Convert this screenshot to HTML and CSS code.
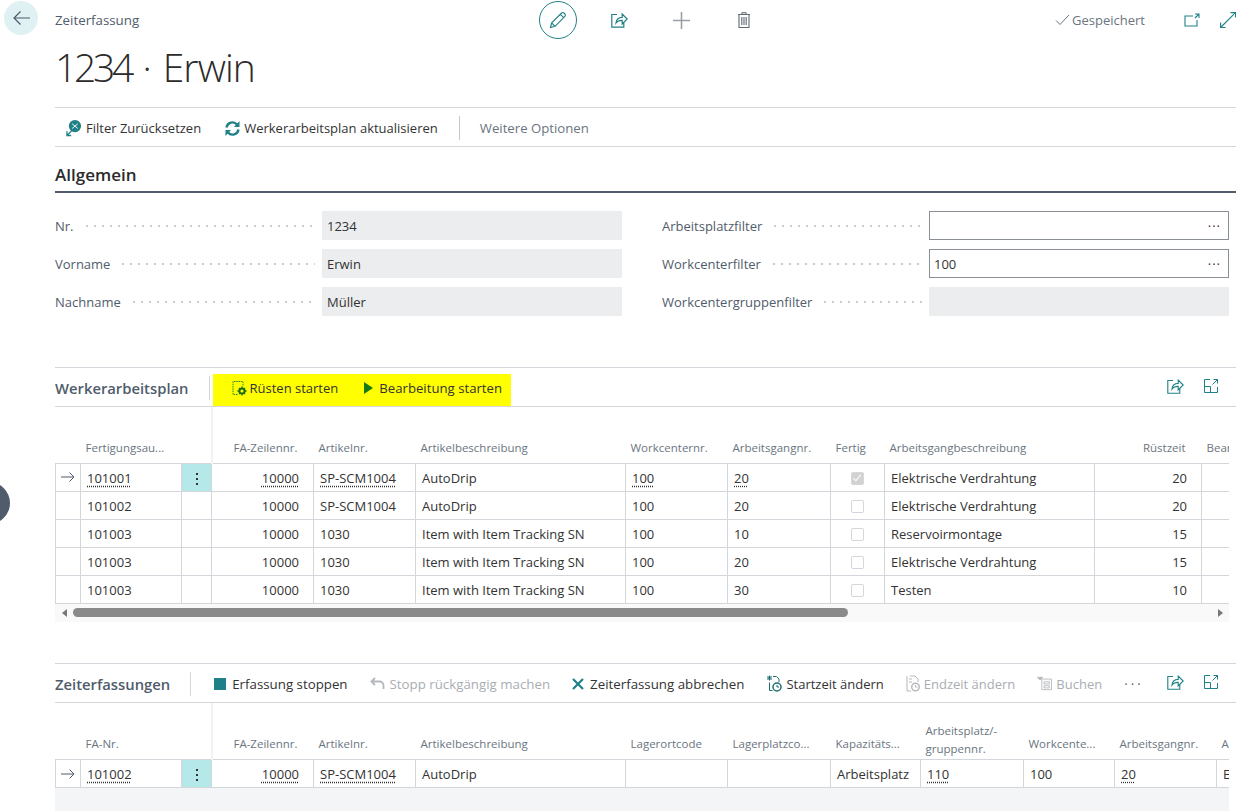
FILE: index.html
```html
<!DOCTYPE html>
<html lang="de">
<head>
    <meta charset="UTF-8">
    <title>Zeiterfassung</title>
    <link rel="stylesheet" href="styles.css">
</head>
<body>
    <div class="back-btn">
        <svg width="17" height="14" viewBox="0 0 17 14" fill="none" stroke="#505c6b" stroke-width="1.2"><path d="M17 7H1M7.500 .5L1 7l6.500 6.500"/></svg>
    </div>
    <div class="side-handle"></div>

    <header class="top-bar">
        <div class="crumb">Zeiterfassung</div>
        <div class="top-actions">
            <span class="edit-btn">
                <svg width="18" height="18" viewBox="0 0 18 18" fill="none" stroke="#1f8087" stroke-width="1.1"><path d="M1.500 16.500l1.200-4.600L12.600 2a1.600 1.600 0 0 1 2.300 0l1 1a1.600 1.600 0 0 1 0 2.300L6 15.300zM2.700 11.900l3.300 3.400M11.300 3.300l3.400 3.400"/></svg>
            </span>
            <span class="top-icon">
                <svg width="17" height="16" viewBox="0 0 17 16" fill="none" stroke="#1f8087" stroke-width="1.2"><path d="M6 2.500H.8v12.700h12V10M5 11c.4-3.500 2.700-5.600 6.200-5.600V2l5 5-5 5V8.400C8.500 8.300 6.500 9 5 11z"/></svg>
            </span>
            <span class="top-icon">
                <svg width="17" height="17" viewBox="0 0 17 17" fill="none" stroke="#9b9fa6" stroke-width="1.6"><path d="M8.500 0v17M0 8.500h17"/></svg>
            </span>
            <span class="top-icon">
                <svg width="14" height="16" viewBox="0 0 14 16" fill="none" stroke="#5f6a75" stroke-width="1.1"><path d="M1 2.500h12M5 2.500V.8h4v1.700M2 2.500v13h10v-13M4.800 5v8M7 5v8M9.200 5v8"/></svg>
            </span>
        </div>
        <div class="saved">
            <svg width="15" height="12" viewBox="0 0 15 12" fill="none" stroke="#6b7580" stroke-width="1"><path d="M1 6.500L5 10.500 14 1"/></svg>
            Gespeichert
        </div>
        <span class="open-icon">
            <svg width="16" height="14" viewBox="0 0 16 14" fill="none" stroke="#1f8087" stroke-width="1.1"><path d="M9 3H1v10h12V7M11 1h4v4M15 1l-4 4"/></svg>
        </span>
        <span class="expand-icon">
            <svg width="16" height="16" viewBox="0 0 16 16" fill="none" stroke="#1f8087" stroke-width="1.1"><path d="M10.500 .6h5v5M15.500 .6L.6 15.500M.6 10.500v5h5"/></svg>
        </span>
    </header>

    <main class="page">
        <h1 class="page-title"><span class="title-no">1234</span> · Erwin</h1>

        <nav class="action-bar">
            <span class="action">
                <svg width="16" height="18" viewBox="0 0 17 18"><circle cx="9.500" cy="7" r="6.500" fill="#1f8087"/><path d="M6.500 4.500l6 5M12.500 4.500l-6 5" stroke="#fff"/><path d="M1 17l5.500-5.500M1 12.500V17h4.500" fill="none" stroke="#1f8087" stroke-width="1.400"/></svg>
                Filter Zurücksetzen
            </span>
            <span class="action">
                <svg width="15" height="15" viewBox="0 0 15 15" fill="none" stroke="#1f8087" stroke-width="2.400"><path d="M1.500 6.500A6 6 0 0 1 12 3.500M13.500 8.500A6 6 0 0 1 3 11.500"/><path d="M14.500 0v6h-5.500zM.5 15V9H6z" fill="#1f8087" stroke="none"/></svg>
                Werkerarbeitsplan aktualisieren
            </span>
            <span class="bar-divider"></span>
            <span class="action action-muted">Weitere Optionen</span>
        </nav>

        <section class="general">
            <h2 class="general-title">Allgemein</h2>
            <div class="field-columns">
                <div class="field-col">
                    <div class="field"><span class="field-label">Nr.</span><span class="field-value">1234</span></div>
                    <div class="field"><span class="field-label">Vorname</span><span class="field-value">Erwin</span></div>
                    <div class="field"><span class="field-label">Nachname</span><span class="field-value">Müller</span></div>
                </div>
                <div class="field-col">
                    <div class="field"><span class="field-label">Arbeitsplatzfilter</span><span class="field-value editable"><i class="more">···</i></span></div>
                    <div class="field"><span class="field-label">Workcenterfilter</span><span class="field-value editable">100<i class="more">···</i></span></div>
                    <div class="field"><span class="field-label">Workcentergruppenfilter</span><span class="field-value"></span></div>
                </div>
            </div>
        </section>

        <section class="part part-plan">
            <div class="part-bar">
                <h2 class="part-title">Werkerarbeitsplan</h2>
                <span class="part-divider"></span>
                <div class="highlight">
                    <span class="action">
                        <svg width="16" height="16" viewBox="0 0 16 16" fill="none"><path d="M6.500 14.500H2V1.500h10V6.500" stroke="#2a8a2a" stroke-dasharray="1.500 .8"/><circle cx="11" cy="11" r="2.600" stroke="#1a6e1a" stroke-width="2"/><path d="M11 6.500v2M11 13.500v2M6.500 11h2M13.500 11h2M8 8l1.200 1.200M14 14l-1.200-1.200M14 8l-1.200 1.200M8 14l1.200-1.200" stroke="#1a6e1a" stroke-width="1.300"/></svg>
                        Rüsten starten
                    </span>
                    <span class="action play-action">
                        <svg width="9" height="12" viewBox="0 0 9 12"><path d="M0 0l9 6-9 6z" fill="#147a14"/></svg>
                        Bearbeitung starten
                    </span>
                </div>
                <div class="part-icons">
                    <svg width="17" height="16" viewBox="0 0 17 16" fill="none" stroke="#1f8087" stroke-width="1.100"><path d="M6 2.500H.8v12.700h12V10M5 11c.4-3.500 2.700-5.600 6.200-5.600V2l5 5-5 5V8.400C8.500 8.300 6.500 9 5 11z"/></svg>
                    <svg width="14" height="14" viewBox="0 0 14 14" fill="none" stroke="#1f8087"><path d="M6 .5H.5v13h13V8M.5 7.500H6.500v6M8.500 5.500l5-5M9.500 .5h4v4"/></svg>
                </div>
            </div>
            <div class="grid-wrap">
                <table class="grid plan-grid">
                    <colgroup>
                        <col class="w25"><col class="w101"><col class="w30"><col class="w102"><col class="w102"><col class="w210"><col class="w102"><col class="w103"><col class="w54"><col class="w210"><col class="w107"><col class="w102">
                    </colgroup>
                    <thead>
                        <tr>
                            <th></th><th>Fertigungsau...</th><th class="th-split"></th><th class="num">FA-Zeilennr.</th><th>Artikelnr.</th><th>Artikelbeschreibung</th><th>Workcenternr.</th><th>Arbeitsgangnr.</th><th>Fertig</th><th>Arbeitsgangbeschreibung</th><th class="num">Rüstzeit</th><th>Bearbeitungszeit</th>
                        </tr>
                    </thead>
                    <tbody>
                        <tr>
                            <td class="marker"><svg width="14" height="10" viewBox="0 0 14 10" fill="none" stroke="#505c6b"><path d="M0 5h13M8.500 .5L13 5l-4.500 4.500"/></svg></td>
                            <td><a class="lnk">101001</a></td><td class="dots-cell"><span class="dots"></span></td><td class="num"><a class="lnk">10000</a></td><td><a class="lnk">SP-SCM1004</a></td><td>AutoDrip</td><td><a class="lnk">100</a></td><td><a class="lnk">20</a></td><td class="center"><span class="check checked"></span></td><td>Elektrische Verdrahtung</td><td class="num">20</td><td></td>
                        </tr>
                        <tr>
                            <td></td><td>101002</td><td></td><td class="num">10000</td><td>SP-SCM1004</td><td>AutoDrip</td><td>100</td><td>20</td><td class="center"><span class="check"></span></td><td>Elektrische Verdrahtung</td><td class="num">20</td><td></td>
                        </tr>
                        <tr>
                            <td></td><td>101003</td><td></td><td class="num">10000</td><td>1030</td><td>Item with Item Tracking SN</td><td>100</td><td>10</td><td class="center"><span class="check"></span></td><td>Reservoirmontage</td><td class="num">15</td><td></td>
                        </tr>
                        <tr>
                            <td></td><td>101003</td><td></td><td class="num">10000</td><td>1030</td><td>Item with Item Tracking SN</td><td>100</td><td>20</td><td class="center"><span class="check"></span></td><td>Elektrische Verdrahtung</td><td class="num">15</td><td></td>
                        </tr>
                        <tr>
                            <td></td><td>101003</td><td></td><td class="num">10000</td><td>1030</td><td>Item with Item Tracking SN</td><td>100</td><td>30</td><td class="center"><span class="check"></span></td><td>Testen</td><td class="num">10</td><td></td>
                        </tr>
                    </tbody>
                </table>
            </div>
            <div class="scrollbar">
                <span class="arrow-left"></span>
                <span class="thumb"></span>
                <span class="arrow-right"></span>
            </div>
        </section>

        <section class="part part-entries">
            <div class="part-bar">
                <h2 class="part-title">Zeiterfassungen</h2>
                <span class="part-divider"></span>
                <div class="entry-actions">
                    <span class="action wide-gap">
                        <svg width="12" height="12" viewBox="0 0 12 12"><rect width="12" height="12" fill="#1f8087"/></svg>
                        Erfassung stoppen
                    </span>
                    <span class="action disabled">
                        <svg width="15" height="13" viewBox="0 0 15 13" fill="none" stroke="#b4b7bc" stroke-width="1.800"><path d="M5 1L1.500 4.500 5 8M2 4.500h7.500a4 4 0 0 1 4 4v3.500"/></svg>
                        Stopp rückgängig machen
                    </span>
                    <span class="action wide-gap">
                        <svg width="12" height="12" viewBox="0 0 12 12" stroke="#1f8087" stroke-width="2.200"><path d="M1 1l10 10M11 1L1 11"/></svg>
                        Zeiterfassung abbrechen
                    </span>
                    <span class="action compact">
                        <svg width="16" height="17" viewBox="0 0 16 17" fill="none" stroke="#1f6e75"><path d="M7 1.500h3.500L13 4v3M3.500 7.500v8h3"/><path d="M1 3h5M3.500 .5v5M1.500 1l4 4M5.500 1l-4 4"/><circle cx="11" cy="12" r="4" stroke-width="1.500"/><path d="M11 10v2h2"/></svg>
                        Startzeit ändern
                    </span>
                    <span class="action disabled compact">
                        <svg width="14" height="17" viewBox="0 0 14 17" fill="none" stroke="#b4b7bc"><path d="M4 1h5l3 3v3M1 1v15h4M3 4h3M3 7h3"/><circle cx="9.500" cy="12" r="3.800" stroke-width="1.400"/><path d="M9.500 10v2h2"/></svg>
                        Endzeit ändern
                    </span>
                    <span class="action disabled compact">
                        <svg width="15" height="15" viewBox="0 0 17 15" fill="none" stroke="#b4b7bc"><path d="M5.500 2.500h11v12h-11zM8 5.500h6v2.500h-6zM8 10h6v2.500h-6z"/><path d="M.5 .5h6l-3 3z" fill="#b4b7bc"/></svg>
                        Buchen
                    </span>
                    <span class="more-actions">···</span>
                </div>
                <div class="part-icons">
                    <svg width="17" height="16" viewBox="0 0 17 16" fill="none" stroke="#1f8087" stroke-width="1.100"><path d="M6 2.500H.8v12.700h12V10M5 11c.4-3.500 2.700-5.600 6.200-5.600V2l5 5-5 5V8.400C8.500 8.300 6.500 9 5 11z"/></svg>
                    <svg width="14" height="14" viewBox="0 0 14 14" fill="none" stroke="#1f8087"><path d="M6 .5H.5v13h13V8M.5 7.500H6.500v6M8.500 5.500l5-5M9.500 .5h4v4"/></svg>
                </div>
            </div>
            <div class="grid-wrap">
                <table class="grid entry-grid">
                    <colgroup>
                        <col class="w25"><col class="w101"><col class="w30"><col class="w102"><col class="w102"><col class="w210"><col class="w102"><col class="w103"><col class="w90"><col class="w103"><col class="w91"><col class="w102"><col class="w210">
                    </colgroup>
                    <thead>
                        <tr>
                            <th></th><th>FA-Nr.</th><th class="th-split"></th><th class="num">FA-Zeilennr.</th><th>Artikelnr.</th><th>Artikelbeschreibung</th><th>Lagerortcode</th><th>Lagerplatzco...</th><th>Kapazitäts...</th><th class="wrap">Arbeitsplatz/-<br>gruppennr.</th><th>Workcente...</th><th>Arbeitsgangnr.</th><th>Arbeitsgangbeschreibung</th>
                        </tr>
                    </thead>
                    <tbody>
                        <tr>
                            <td class="marker"><svg width="14" height="10" viewBox="0 0 14 10" fill="none" stroke="#505c6b"><path d="M0 5h13M8.500 .5L13 5l-4.500 4.500"/></svg></td>
                            <td><a class="lnk">101002</a></td><td class="dots-cell"><span class="dots"></span></td><td class="num"><a class="lnk">10000</a></td><td><a class="lnk">SP-SCM1004</a></td><td>AutoDrip</td><td></td><td></td><td>Arbeitsplatz</td><td><a class="lnk">110</a></td><td>100</td><td><a class="lnk">20</a></td><td>Elektrische Verdrahtung</td>
                        </tr>
                    </tbody>
                </table>
            </div>
            <div class="grid-footer"></div>
        </section>
    </main>
</body>
</html>
```

FILE: styles.css
```css
:root {
    --teal: #1f8087;
    --slate: #505c6b;
    --grey-text: #6b7580;
    --line: #d5d7dc;
    --cell-line: #d3d6da;
}

html, body {
    height: 811px;
    overflow: hidden;
}

body {
    margin: 0;
    background: #fff;
    color: #212121;
    font-family: "Open Sans", "Liberation Sans", sans-serif;
    font-size: 13px;
    position: relative;
}

svg {
    display: block;
    flex: none;
}

.back-btn {
    position: absolute;
    left: 4px;
    top: 1px;
    width: 34px;
    height: 34px;
    border-radius: 50%;
    background: #dff1f2;
    display: flex;
    align-items: center;
    justify-content: center;
}

.side-handle {
    position: absolute;
    left: -32px;
    top: 482px;
    width: 42px;
    height: 42px;
    border-radius: 50%;
    background: var(--slate);
}

.top-bar {
    display: flex;
    align-items: center;
    height: 40px;
    padding-left: 55px;
}

.crumb {
    width: 484px;
    color: var(--slate);
    font-size: 13.3px;
}

.top-actions {
    display: flex;
    align-items: center;
}

.edit-btn {
    width: 36px;
    height: 36px;
    border: 1px solid var(--teal);
    border-radius: 50%;
    display: flex;
    align-items: center;
    justify-content: center;
    margin-right: 11px;
}

.top-icon {
    width: 62.5px;
    display: flex;
    justify-content: center;
}

.saved {
    margin-left: auto;
    display: flex;
    align-items: center;
    gap: 2px;
    color: var(--grey-text);
    font-size: 13px;
}

.open-icon {
    margin-left: 39px;
}

.expand-icon {
    margin-left: 20px;
}

.page {
    padding-left: 55px;
}

.page-title {
    margin: 0;
    height: 67px;
    line-height: 54px;
    font-size: 39px;
    font-weight: 300;
    letter-spacing: -0.9px;
    word-spacing: 2.5px;
    color: #2b2b2b;
}

.title-no {
    letter-spacing: -3.3px;
}

.action-bar {
    box-sizing: border-box;
    height: 40px;
    padding: 2px 0 0 11px;
    border-top: 1px solid var(--line);
    border-bottom: 1px solid var(--line);
    display: flex;
    align-items: center;
}

.action {
    display: flex;
    align-items: center;
    gap: 5px;
    white-space: nowrap;
    color: #333;
}

.action-bar .action {
    gap: 4px;
}

.action-bar .action + .action {
    margin-left: 24px;
}

.action-bar .action-muted {
    margin-left: 0;
    color: var(--grey-text);
    font-size: 13.2px;
}

.bar-divider {
    width: 1px;
    height: 24px;
    background: #c4c7cc;
    margin: 0 20px 0 21px;
}

.general-title {
    margin: 0;
    height: 44px;
    line-height: 56px;
    font-size: 17px;
    font-weight: 600;
    color: #2b2b2b;
    border-bottom: 2px solid var(--slate);
}

.field-columns {
    display: flex;
    gap: 40px;
    padding-top: 18px;
}

.field-col {
    width: 567px;
    display: flex;
    flex-direction: column;
    gap: 9px;
}

.field {
    display: flex;
    align-items: center;
    height: 29px;
}

.field-label {
    flex: 1;
    margin-right: 7px;
    overflow: hidden;
    white-space: nowrap;
    color: var(--slate);
    display: flex;
    align-items: center;
    gap: 9px;
}

.field-label::after {
    content: "";
    flex: 1;
    height: 2px;
    background-image: radial-gradient(circle, #c9ccd1 1px, transparent 1px);
    background-size: 8px 2px;
}

.field-value {
    width: 295px;
    height: 29px;
    line-height: 31px;
    padding-left: 5px;
    background: #ecedef;
    color: #333;
    position: relative;
}

.field-value.editable {
    box-sizing: border-box;
    width: 300px;
    padding-left: 4px;
    background: #fff;
    border: 1px solid #8a8e95;
    line-height: 29px;
}

.more {
    position: absolute;
    right: 7px;
    top: 0;
    font-style: normal;
    letter-spacing: 1px;
    color: #5a2a3a;
}

.part-plan {
    margin-top: 51px;
}

.part-entries {
    margin-top: 41px;
}

.part-bar {
    box-sizing: border-box;
    height: 40px;
    padding-top: 2px;
    border-top: 1px solid var(--line);
    border-bottom: 1px solid var(--line);
    display: flex;
    align-items: center;
}

.part-title {
    margin: 0;
    font-size: 14.8px;
    font-weight: 600;
    color: var(--slate);
}

.part-divider {
    width: 1px;
    height: 24px;
    background: #d5d7dc;
    margin: 0 3px 0 20px;
}

.highlight {
    box-sizing: border-box;
    align-self: flex-end;
    width: 298px;
    height: 32px;
    padding: 0 0 5px 18px;
    display: flex;
    align-items: center;
    gap: 26px;
    background: #ffff00;
}

.highlight .action {
    gap: 3px;
}

.highlight .play-action {
    gap: 6px;
    font-size: 13.2px;
}

.entry-actions {
    display: flex;
    align-items: center;
    gap: 22px;
    padding-left: 20px;
    font-size: 13.3px;
}

.wide-gap {
    gap: 6px;
}

.compact {
    gap: 4px;
    font-size: 13px;
}

.disabled {
    color: #a9adb3;
}

.more-actions {
    color: var(--slate);
    letter-spacing: 3px;
}

.part-icons {
    margin: 0 0 4px auto;
    display: flex;
    align-items: center;
    gap: 20px;
    padding-right: 18px;
}

.grid-wrap {
    width: 1174px;
    overflow: hidden;
}

.grid {
    border-collapse: collapse;
    table-layout: fixed;
}

.plan-grid {
    width: 1248px;
}

.entry-grid {
    width: 1371px;
}

.w25 { width: 25px; }
.w30 { width: 30px; }
.w54 { width: 54px; }
.w90 { width: 90px; }
.w91 { width: 91px; }
.w101 { width: 101px; }
.w102 { width: 102px; }
.w103 { width: 103px; }
.w107 { width: 107px; }
.w210 { width: 210px; }

.grid th {
    height: 56px;
    padding: 0 5px 6px;
    box-sizing: border-box;
    vertical-align: bottom;
    text-align: left;
    font-size: 11.5px;
    font-weight: 400;
    line-height: 18px;
    color: var(--grey-text);
    white-space: nowrap;
    overflow: hidden;
    border-bottom: 1px solid var(--cell-line);
}

.entry-grid th {
    height: 57px;
}

.grid th.wrap {
    padding-bottom: 1px;
}

.grid th.num {
    text-align: right;
    padding-right: 16px;
}

.grid td.num {
    text-align: right;
    padding-right: 14px;
}

.grid th.th-split {
    border-right: 2px solid #f1f2f3;
}

.grid td {
    height: 28px;
    padding: 1px 6px 0;
    box-sizing: border-box;
    border: 1px solid var(--cell-line);
    color: #333;
    white-space: nowrap;
    overflow: hidden;
}

.grid td.marker {
    padding: 0 0 0 5px;
}

.grid td.dots-cell {
    background: #b5e8e9;
    padding: 0;
    text-align: center;
}

.dots {
    display: inline-block;
    width: 2px;
    height: 2px;
    background: #333;
    vertical-align: middle;
    box-shadow: 0 -5px 0 #333, 0 5px 0 #333;
}

.lnk {
    text-decoration: underline dotted #333;
    text-underline-offset: 3px;
}

.center {
    text-align: center;
}

.grid td.center {
    padding: 0;
}

.check {
    display: inline-block;
    width: 13px;
    height: 13px;
    box-sizing: border-box;
    border: 1px solid #d5d7da;
    border-radius: 2px;
    vertical-align: middle;
    position: relative;
}

.check.checked {
    background: #d2d2d2;
}

.check.checked::after {
    content: "";
    position: absolute;
    left: 3px;
    top: 0;
    width: 3px;
    height: 7px;
    border: solid #fff;
    border-width: 0 1.5px 1.5px 0;
    transform: rotate(40deg);
}

.scrollbar {
    width: 1174px;
    height: 18px;
    background: #f9f9f9;
    display: flex;
    align-items: center;
}

.arrow-left {
    margin-left: 7px;
    border: 4px solid transparent;
    border-right: 5px solid #777;
    border-left: 0;
}

.thumb {
    width: 775px;
    height: 9px;
    margin-left: 6px;
    border-radius: 5px;
    background: #8a8a8a;
}

.arrow-right {
    margin-left: auto;
    margin-right: 6px;
    border: 4px solid transparent;
    border-left: 5px solid #777;
    border-right: 0;
}

.grid-footer {
    width: 1174px;
    height: 30px;
    background: #f4f5f6;
}
```
